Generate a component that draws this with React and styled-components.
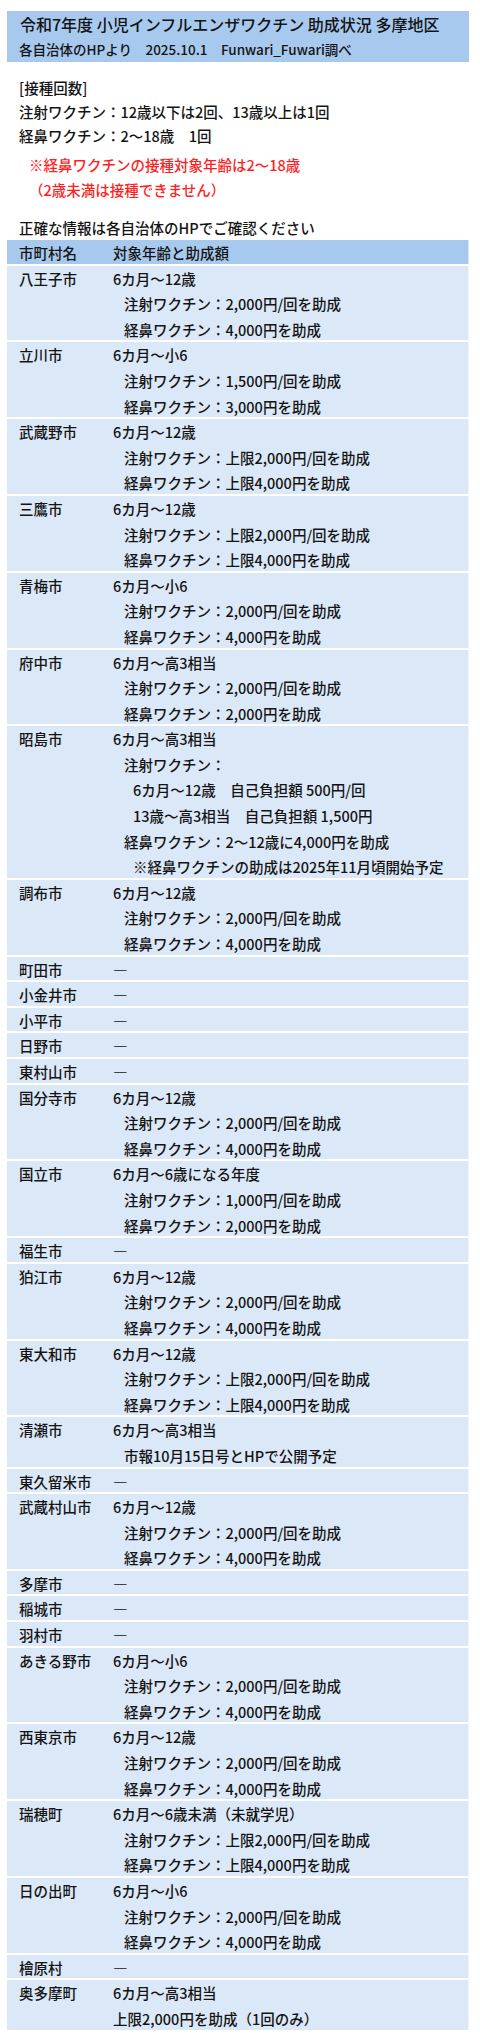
import React from "react";
import styled, { createGlobalStyle } from "styled-components";

const GlobalStyle = createGlobalStyle`
    body {
        margin: 0;
        background: #ffffff;
        color: #141414;
        font-family: "Noto Sans CJK JP", "Noto Sans", sans-serif;
        font-weight: 500;
    }
`;

const HEAD_BLUE = "#a8c9ee";
const ROW_BLUE = "#dbe8f7";

// indent: 0 = 年齢, 1 = ワクチン別, 2 = 補足
const standard = (age, inj, nasal) => [
    [0, age],
    [1, `注射ワクチン：${inj}`],
    [1, `経鼻ワクチン：${nasal}`],
];

const NONE = [[0, "―"]];

const CITIES = [
    { name: "八王子市", lines: standard("6カ月～12歳", "2,000円/回を助成", "4,000円を助成") },
    { name: "立川市", lines: standard("6カ月～小6", "1,500円/回を助成", "3,000円を助成") },
    { name: "武蔵野市", lines: standard("6カ月～12歳", "上限2,000円/回を助成", "上限4,000円を助成") },
    { name: "三鷹市", lines: standard("6カ月～12歳", "上限2,000円/回を助成", "上限4,000円を助成") },
    { name: "青梅市", lines: standard("6カ月～小6", "2,000円/回を助成", "4,000円を助成") },
    { name: "府中市", lines: standard("6カ月～高3相当", "2,000円/回を助成", "2,000円を助成") },
    {
        name: "昭島市",
        lines: [
            [0, "6カ月～高3相当"],
            [1, "注射ワクチン："],
            [2, "6カ月～12歳　自己負担額 500円/回"],
            [2, "13歳～高3相当　自己負担額 1,500円"],
            [1, "経鼻ワクチン：2～12歳に4,000円を助成"],
            [2, "※経鼻ワクチンの助成は2025年11月頃開始予定"],
        ],
    },
    { name: "調布市", lines: standard("6カ月～12歳", "2,000円/回を助成", "4,000円を助成") },
    { name: "町田市", lines: NONE },
    { name: "小金井市", lines: NONE },
    { name: "小平市", lines: NONE },
    { name: "日野市", lines: NONE },
    { name: "東村山市", lines: NONE },
    { name: "国分寺市", lines: standard("6カ月～12歳", "2,000円/回を助成", "4,000円を助成") },
    { name: "国立市", lines: standard("6カ月～6歳になる年度", "1,000円/回を助成", "2,000円を助成") },
    { name: "福生市", lines: NONE },
    { name: "狛江市", lines: standard("6カ月～12歳", "2,000円/回を助成", "4,000円を助成") },
    { name: "東大和市", lines: standard("6カ月～12歳", "上限2,000円/回を助成", "上限4,000円を助成") },
    { name: "清瀬市", lines: [[0, "6カ月～高3相当"], [1, "市報10月15日号とHPで公開予定"]] },
    { name: "東久留米市", lines: NONE },
    { name: "武蔵村山市", lines: standard("6カ月～12歳", "2,000円/回を助成", "4,000円を助成") },
    { name: "多摩市", lines: NONE },
    { name: "稲城市", lines: NONE },
    { name: "羽村市", lines: NONE },
    { name: "あきる野市", lines: standard("6カ月～小6", "2,000円/回を助成", "4,000円を助成") },
    { name: "西東京市", lines: standard("6カ月～12歳", "2,000円/回を助成", "4,000円を助成") },
    { name: "瑞穂町", lines: standard("6カ月～6歳未満（未就学児）", "上限2,000円/回を助成", "上限4,000円を助成") },
    { name: "日の出町", lines: standard("6カ月～小6", "2,000円/回を助成", "4,000円を助成") },
    { name: "檜原村", lines: NONE },
    { name: "奥多摩町", lines: [[0, "6カ月～高3相当"], [0, "上限2,000円を助成（1回のみ）"]] },
];

const Page = styled.div`
    width: 462px;
    padding: 11px 11px 8px 7px;
    font-size: 14.5px;
`;

const TitleBox = styled.header`
    background-color: ${HEAD_BLUE};
    padding: 0 12px;

    h1 {
        margin: 0;
        font-size: 16px;
        font-weight: 500;
        line-height: 26px;
        padding-left: 1px;
    }

    p {
        margin: 0;
        font-size: 13.5px;
        line-height: 25px;
    }
`;

const Intro = styled.section`
    padding-left: 12px;
    margin-top: 14px;
`;

const IntroLine = styled.div`
    line-height: 24px;
`;

const Notice = styled.div`
    color: #ff1f1f;
    line-height: 25px;
    margin: 4px 0 0;
    padding-left: 10px;
`;

const Caution = styled.div`
    line-height: 24px;
    margin-top: 14px;
`;

const Table = styled.div`
    display: flex;
    flex-direction: column;
`;

const Row = styled.div`
    display: grid;
    grid-template-columns: 106px 1fr;
    background-color: ${props => (props.$head ? HEAD_BLUE : ROW_BLUE)};
    box-shadow: inset 0 -2px 0 #ffffff, inset -1px 0 0 rgba(255, 255, 255, 0.55);
    line-height: 25.6px;
`;

const NameCell = styled.div`
    padding-left: 12px;
    white-space: nowrap;
`;

const InfoCell = styled.div`
    white-space: nowrap;
`;

const Line = styled.div`
    padding-left: ${props => [0, 11, 20][props.$indent]}px;
`;

export default function App() {
    return (
        <Page>
            <GlobalStyle />
            <TitleBox>
                <h1>令和7年度 小児インフルエンザワクチン 助成状況 多摩地区</h1>
                <p>各自治体のHPより　2025.10.1　Funwari_Fuwari調べ</p>
            </TitleBox>

            <Intro>
                <IntroLine>[接種回数]</IntroLine>
                <IntroLine>注射ワクチン：12歳以下は2回、13歳以上は1回</IntroLine>
                <IntroLine>経鼻ワクチン：2～18歳　1回</IntroLine>
                <Notice>
                    <div>※経鼻ワクチンの接種対象年齢は2～18歳</div>
                    <div>（2歳未満は接種できません）</div>
                </Notice>
                <Caution>正確な情報は各自治体のHPでご確認ください</Caution>
            </Intro>

            <Table>
                <Row $head>
                    <NameCell>市町村名</NameCell>
                    <InfoCell>対象年齢と助成額</InfoCell>
                </Row>
                {CITIES.map((city) => (
                    <Row key={city.name}>
                        <NameCell>{city.name}</NameCell>
                        <InfoCell>
                            {city.lines.map(([indent, text], i) => (
                                <Line key={i} $indent={indent}>{text}</Line>
                            ))}
                        </InfoCell>
                    </Row>
                ))}
            </Table>
        </Page>
    );
}
